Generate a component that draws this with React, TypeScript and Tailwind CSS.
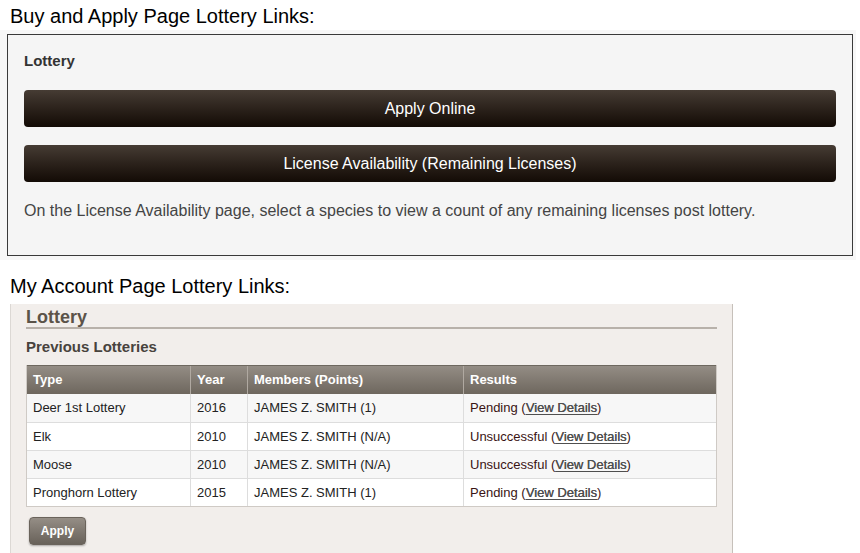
const rows = [
  { type: "Deer 1st Lottery", year: "2016", member: "JAMES Z. SMITH (1)", result: "Pending" },
  { type: "Elk", year: "2010", member: "JAMES Z. SMITH (N/A)", result: "Unsuccessful" },
  { type: "Moose", year: "2010", member: "JAMES Z. SMITH (N/A)", result: "Unsuccessful" },
  { type: "Pronghorn Lottery", year: "2015", member: "JAMES Z. SMITH (1)", result: "Pending" },
];

const cols = "grid grid-cols-[163px_57px_216px_253px]";

export default function App() {
  return (
    <div className="h-[553px] w-[860px] overflow-hidden bg-white [font-family:'Liberation_Sans',Arial,sans-serif]">
      <p className="pl-[10px] pt-[4px] text-[20px] leading-[24px] text-black">
        Buy and Apply Page Lottery Links:
      </p>

      {/* buy and apply box */}
      <div className="mt-[2px] w-[856px] bg-[#f7f7f7] pb-[4px] pl-[7px] pr-[3px] pt-[4px]">
        <div className="h-[222px] border border-[#3a3a3a] bg-[#f5f5f5] px-[16px] pt-[17px]">
          <h3 className="text-[15px] font-bold leading-[18px] text-[#333]">Lottery</h3>
          <button className="mt-[20px] flex h-[37px] w-full items-center justify-center rounded-[4px] bg-linear-to-b from-[#463c34] to-[#130b06] text-[16px] text-white">
            Apply Online
          </button>
          <button className="mt-[18px] flex h-[37px] w-full items-center justify-center rounded-[4px] bg-linear-to-b from-[#463c34] to-[#130b06] text-[16px] text-white">
            License Availability (Remaining Licenses)
          </button>
          <p className="mt-[19px] text-[16px] leading-[20px] text-[#444]">
            On the License Availability page, select a species to view a count of any remaining licenses post lottery.
          </p>
        </div>
      </div>

      <p className="mt-[14px] pl-[10px] text-[20px] leading-[24px] text-black">
        My Account Page Lottery Links:
      </p>

      {/* my account box */}
      <div className="ml-[10px] mt-[6px] h-[260px] w-[723px] border-l border-r border-l-[#dcd8d4] border-r-[#c6c0ba] bg-[#f2eeeb] px-[15px] pt-[3px]">
        <h2 className="border-b-2 border-[#b8b1aa] text-[18px] font-bold leading-[20px] text-[#5b5349]">
          Lottery
        </h2>
        <h3 className="mt-[9px] text-[15px] font-bold leading-[18px] text-[#48433d]">
          Previous Lotteries
        </h3>

        <div className="mt-[9px] w-[691px] border-x border-b border-[#cfcac5] text-[13px]">
          <div className={`${cols} h-[29px] border-t border-[#6e685f] bg-linear-to-b from-[#948d85] to-[#6e675e] font-bold text-white`}>
            <div className="flex items-center pl-[6px]">Type</div>
            <div className="flex items-center border-l border-[#b0a9a1] pl-[6px]">Year</div>
            <div className="flex items-center border-l border-[#b0a9a1] pl-[6px]">Members (Points)</div>
            <div className="flex items-center border-l border-[#b0a9a1] pl-[6px]">Results</div>
          </div>
          {rows.map((r, i) => (
            <div
              key={r.type}
              className={`${cols} h-[28px] text-[#222] ${i % 2 === 0 ? "bg-[#f7f7f7]" : "bg-white"} ${i > 0 ? "border-t border-[#ddd]" : ""}`}
            >
              <div className="flex items-center pl-[6px]">{r.type}</div>
              <div className="flex items-center border-l border-[#ddd] pl-[6px]">{r.year}</div>
              <div className="flex items-center border-l border-[#ddd] pl-[6px]">{r.member}</div>
              <div className="flex items-center border-l border-[#ddd] pl-[6px] text-[#3a1414]">
                {r.result}&nbsp;(
                <a href="#" className="text-[#4f4f4f] underline underline-offset-2 [text-shadow:0.3px_0_0_#4f4f4f]">
                  View Details
                </a>
                )
              </div>
            </div>
          ))}
        </div>

        <button className="ml-[3px] mt-[10px] h-[28px] w-[57px] rounded-[4px] border border-[#6a635b] bg-linear-to-b from-[#958e86] to-[#69625a] text-[12px] font-bold text-white shadow-[0_1px_2px_rgba(0,0,0,0.3)]">
          Apply
        </button>
      </div>
    </div>
  );
}
